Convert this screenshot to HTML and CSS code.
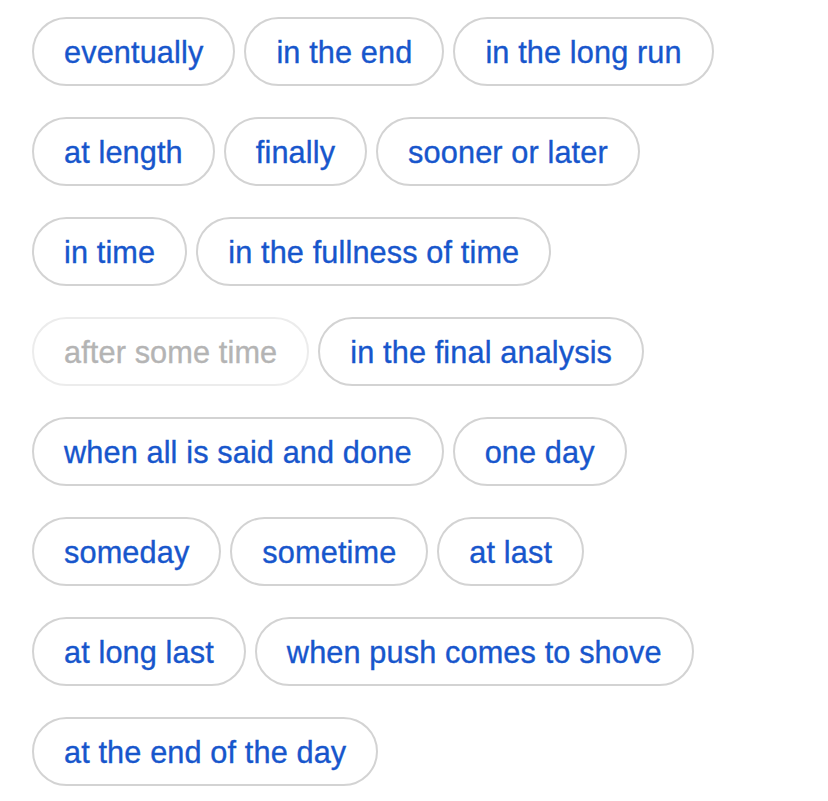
FILE: index.html
```html
<!DOCTYPE html>
<html>
<head>
  <title>Synonyms</title>
  <meta charset="UTF-8" />
  <link rel="stylesheet" href="styles.css">
</head>
<body>
  <!-- synonym chips -->
  <div class="chips">
    <div class="row">
      <span class="chip">eventually</span>
      <span class="chip">in the end</span>
      <span class="chip">in the long run</span>
    </div>
    <div class="row">
      <span class="chip">at length</span>
      <span class="chip">finally</span>
      <span class="chip">sooner or later</span>
    </div>
    <div class="row">
      <span class="chip">in time</span>
      <span class="chip">in the fullness of time</span>
    </div>
    <div class="row">
      <span class="chip disabled">after some time</span>
      <span class="chip">in the final analysis</span>
    </div>
    <div class="row">
      <span class="chip">when all is said and done</span>
      <span class="chip">one day</span>
    </div>
    <div class="row">
      <span class="chip">someday</span>
      <span class="chip">sometime</span>
      <span class="chip">at last</span>
    </div>
    <div class="row">
      <span class="chip">at long last</span>
      <span class="chip">when push comes to shove</span>
    </div>
    <div class="row">
      <span class="chip">at the end of the day</span>
    </div>
  </div>
</body>
</html>
```

FILE: styles.css
```css
body {
  margin: 0;
  background: #fff;
  font-family: "Liberation Sans", Arial, sans-serif;
}
.chips {
  display: flex;
  flex-direction: column;
  gap: 31px;
  padding: 17px 0 0 32px;
}
.row {
  display: flex;
  gap: 9px;
}
.chip {
  box-sizing: border-box;
  height: 69px;
  display: inline-flex;
  align-items: center;
  padding: 3px 30px 0;
  border: 2px solid #d3d3d3;
  border-radius: 35px;
  font-size: 30.7px;
  letter-spacing: 0.12px;
  color: #1756cc;
  -webkit-text-stroke: 0.35px #1756cc;
  white-space: nowrap;
}
.chip.disabled {
  border-color: #ececec;
  color: #b4b4b4;
  -webkit-text-stroke: 0.35px #b4b4b4;
}
```
